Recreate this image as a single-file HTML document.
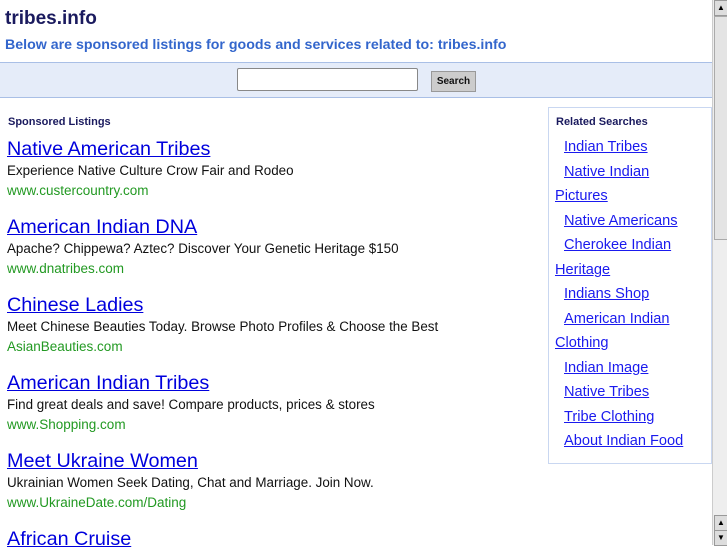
<!DOCTYPE html>
<html><head><style>
body{margin:0;width:727px;height:545px;overflow:hidden;font-family:"Liberation Sans",sans-serif;background:#fff;position:relative}
.a{position:absolute;white-space:nowrap}
h1{position:absolute;left:5px;top:8px;margin:0;font-size:19px;color:#1a1a5e;font-weight:bold}
.sub{left:5px;top:37px;font-size:14.2px;font-weight:bold;color:#3366cc}
.band{position:absolute;left:0;top:62px;width:712px;height:34px;background:#e5ecf9;border-top:1px solid #a9bfe6;border-bottom:1px solid #a9bfe6}
.inp{position:absolute;left:237px;top:68px;width:179px;height:21px;border:1px solid #888;border-radius:2px;background:#fff}
.btn{position:absolute;left:431px;top:71px;width:43px;height:19px;background:#ccc;border:1px solid #999;font-size:10px;font-weight:bold;text-align:center;line-height:19px;color:#111}
.sl{left:8px;top:116px;font-size:11px;font-weight:bold;color:#1a1a5e}
.t{font-size:19.8px;color:#0000dd;text-decoration:underline}
.d{font-size:13.4px;color:#111}
.u{font-size:13.5px;color:#229922}
.box{position:absolute;left:548px;top:107px;width:162px;height:355px;border:1px solid #c9d7f1}
.rs{left:556px;top:116px;font-size:11px;font-weight:bold;color:#1a1a5e}
.r{font-size:14.6px;color:#1a1aee;text-decoration:underline}
.sb{position:absolute;left:712px;top:0;width:15px;height:545px;background:#eee;border-left:1px solid #ccc}
</style></head><body>
<h1>tribes.info</h1>
<div class="a sub">Below are sponsored listings for goods and services related to: tribes.info</div>
<div class="band"></div><div class="inp"></div><div class="btn">Search</div>
<div class="a sl">Sponsored Listings</div>
<div class="a t" style="left:7px;top:138px">Native American Tribes</div>
<div class="a d" style="left:7px;top:163px">Experience Native Culture Crow Fair and Rodeo</div>
<div class="a u" style="left:7px;top:183px">www.custercountry.com</div>
<div class="a t" style="left:7px;top:216px">American Indian DNA</div>
<div class="a d" style="left:7px;top:241px">Apache? Chippewa? Aztec? Discover Your Genetic Heritage $150</div>
<div class="a u" style="left:7px;top:261px">www.dnatribes.com</div>
<div class="a t" style="left:7px;top:294px">Chinese Ladies</div>
<div class="a d" style="left:7px;top:319px">Meet Chinese Beauties Today. Browse Photo Profiles &amp; Choose the Best</div>
<div class="a u" style="left:7px;top:339px">AsianBeauties.com</div>
<div class="a t" style="left:7px;top:372px">American Indian Tribes</div>
<div class="a d" style="left:7px;top:397px">Find great deals and save! Compare products, prices &amp; stores</div>
<div class="a u" style="left:7px;top:417px">www.Shopping.com</div>
<div class="a t" style="left:7px;top:450px">Meet Ukraine Women</div>
<div class="a d" style="left:7px;top:475px">Ukrainian Women Seek Dating, Chat and Marriage. Join Now.</div>
<div class="a u" style="left:7px;top:495px">www.UkraineDate.com/Dating</div>
<div class="a t" style="left:7px;top:528px">African Cruise</div>
<div class="box"></div>
<div class="a rs">Related Searches</div>
<div class="a r" style="left:564px;top:139px">Indian Tribes</div>
<div class="a r" style="left:564px;top:164px">Native Indian</div>
<div class="a r" style="left:555px;top:188px">Pictures</div>
<div class="a r" style="left:564px;top:213px">Native Americans</div>
<div class="a r" style="left:564px;top:237px">Cherokee Indian</div>
<div class="a r" style="left:555px;top:262px">Heritage</div>
<div class="a r" style="left:564px;top:286px">Indians Shop</div>
<div class="a r" style="left:564px;top:311px">American Indian</div>
<div class="a r" style="left:555px;top:335px">Clothing</div>
<div class="a r" style="left:564px;top:360px">Indian Image</div>
<div class="a r" style="left:564px;top:384px">Native Tribes</div>
<div class="a r" style="left:564px;top:409px">Tribe Clothing</div>
<div class="a r" style="left:564px;top:433px">About Indian Food</div>
<div class="sb">
<div style="position:absolute;left:1px;top:0;width:12px;height:14px;background:#ddd;border:1px solid #999;font-size:8px;text-align:center;line-height:14px">▲</div>
<div style="position:absolute;left:1px;top:16px;width:12px;height:222px;background:#e4e4e4;border:1px solid #aaa"></div>
<div style="position:absolute;left:1px;top:515px;width:12px;height:14px;background:#ddd;border:1px solid #999;font-size:8px;text-align:center;line-height:14px">▲</div>
<div style="position:absolute;left:1px;top:530px;width:12px;height:14px;background:#ddd;border:1px solid #999;font-size:8px;text-align:center;line-height:14px">▼</div>
</div>
</body></html>
